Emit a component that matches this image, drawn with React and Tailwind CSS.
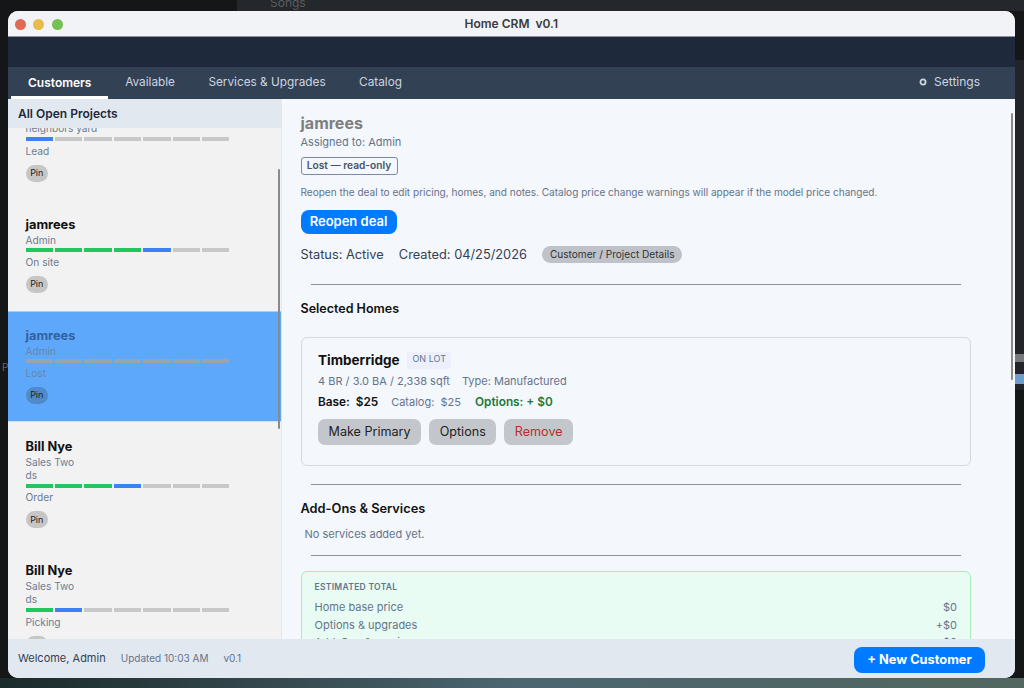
import { Fragment } from 'react';

const tabs = ['Customers', 'Available', 'Services & Upgrades', 'Catalog'];

const customers = [
  { name: 'jamrees', owner: 'Admin', note: 'neighbors yard', stage: 'Lead', done: 0, current: 0 },
  { name: 'jamrees', owner: 'Admin', stage: 'On site', done: 4, current: 4 },
  { name: 'jamrees', owner: 'Admin', stage: 'Lost', done: 0, current: -1, selected: true },
  { name: 'Bill Nye', owner: 'Sales Two', note: 'ds', stage: 'Order', done: 3, current: 3 },
  { name: 'Bill Nye', owner: 'Sales Two', note: 'ds', stage: 'Picking', done: 1, current: 1 },
];

function StageBar({ done, current, selected }) {
  return (
    <div className="mt-[1.5px] flex h-1 w-[204px] gap-[2px]">
      {[0, 1, 2, 3, 4, 5, 6].map((i) => {
        let color = selected ? 'bg-[#9aa3b0]' : 'bg-[#c8c8c8]';
        if (i < done) color = 'bg-[#22c55e]';
        if (i === current) color = 'bg-[#3b82f6]';
        return <div key={i} className={`flex-1 ${color}`} />;
      })}
    </div>
  );
}

function CustomerCard({ c }) {
  const sub = c.selected ? 'text-[#6685ad]' : 'text-[#6b7c95]';
  return (
    <div
      className={`px-[18px] pt-[16.5px] pb-[18.5px] ${
        c.selected ? 'bg-[#5ea8fb] shadow-[inset_0_1px_0_#a9cdf8,inset_0_-1px_0_#cfe0f5]' : ''
      }`}
    >
      <div className={`h-4 text-[12.8px] leading-4 font-bold ${c.selected ? 'text-[#33619f]' : 'text-[#111]'}`}>
        {c.name}
      </div>
      <div className={`h-[14px] text-[10.1px] leading-[14px] ${sub}`}>{c.owner}</div>
      {c.note && <div className={`h-[13.5px] text-[10.1px] leading-[13.5px] ${sub}`}>{c.note}</div>}
      <StageBar done={c.done} current={c.current} selected={c.selected} />
      <div className={`mt-[2.5px] h-[14px] text-[10.2px] leading-[14px] ${sub}`}>{c.stage}</div>
      <div
        className={`mt-[7px] flex h-[17px] w-[22.5px] items-center justify-center rounded-full text-[9px] text-[#222] ${
          c.selected ? 'bg-[#4f8acb]' : 'bg-[#c6c6c6]'
        }`}
      >
        Pin
      </div>
    </div>
  );
}

function Divider() {
  return <div className="mr-[54.5px] ml-[10.5px] h-px bg-[#8f9196]" />;
}

function GrayButton({ children, className = '' }) {
  return (
    <button type="button" className={`h-[26px] rounded-[7px] bg-[#c3c7cc] px-[10.5px] pt-px text-[12.6px] ${className}`}>
      {children}
    </button>
  );
}

function PriceRow({ label, value }) {
  return (
    <div className="flex h-[17.5px] items-center justify-between text-[11px] text-[#64748b]">
      <span>{label}</span>
      <span>{value}</span>
    </div>
  );
}

export default function App() {
  return (
    <div className="relative h-[688px] w-[1024px] overflow-hidden bg-[#151617] pt-[11px] pr-[9px] pb-[10px] pl-[7.5px] font-['Inter',sans-serif]">
      {/* desktop behind the window */}
      <div className="absolute top-0 right-0 left-[237px] h-[11px] bg-[#24272b]" />
      <div className="absolute top-0 left-[270px] text-[12px] leading-[6px] text-[#5a5d61]">Songs</div>
      <div className="absolute top-[60px] right-0 h-[330px] w-[9px] bg-[#222429]" />
      <div className="absolute top-[354px] right-0 h-2 w-[9px] bg-[#77797c]" />
      <div className="absolute top-[374px] right-0 h-[10px] w-[9px] bg-[#6f9ccb]" />
      <div className="absolute top-[360px] left-[2px] text-[10px] text-[#666]">P</div>
      <div className="absolute right-0 bottom-0 left-0 h-[10px] bg-gradient-to-r from-[#1b2a2a] via-[#4c6570] to-[#52675f]" />

      <div className="relative flex h-[667px] w-[1007.5px] flex-col overflow-hidden rounded-[10px] bg-[#f4f7fc]">
        <div className="relative flex h-[26px] items-center justify-center border-b border-[#8f9299] bg-[#f2f3f6]">
          <div className="absolute top-[7.5px] left-[7px] flex gap-[7.5px]">
            <span className="h-[11px] w-[11px] rounded-full bg-[#dd6b55]" />
            <span className="h-[11px] w-[11px] rounded-full bg-[#e8bb4a]" />
            <span className="h-[11px] w-[11px] rounded-full bg-[#73c153]" />
          </div>
          <span className="text-[12px] font-semibold whitespace-pre text-[#3a3a3a]">Home CRM  v0.1</span>
        </div>
        <div className="h-[30px] bg-[#1e293b]" />
        <div className="flex h-[32px] items-stretch justify-between bg-[#334155] pr-[35px] pl-[3.5px]">
          <div className="flex">
            {tabs.map((t, i) => (
              <div
                key={t}
                className={`flex items-center border-b-[3px] pt-[2px] ${
                  i === 0
                    ? 'border-white px-[17px] text-[12px] font-semibold text-white'
                    : 'border-transparent px-[16.7px] text-[11.8px] text-[#cbd5e1]'
                }`}
              >
                {t}
              </div>
            ))}
          </div>
          <div className="flex items-center gap-[7px] pb-[2px] text-[12px] text-[#cbd5e1]">
            <svg width="8" height="8" viewBox="0 0 8 8">
              <circle cx="4" cy="4" r="2.6" fill="none" stroke="#cbd5e1" strokeWidth="1.8" />
            </svg>
            Settings
          </div>
        </div>

        <div className="relative flex min-h-0 flex-1">
          <aside className="flex w-[274.5px] shrink-0 flex-col overflow-hidden border-r border-[#e2e8f0] bg-[#f2f2f2]">
            <div className="relative z-10 flex h-[29px] shrink-0 items-center bg-[#e2e8f0] pl-[10.5px] text-[12px] font-semibold text-[#1e293b]">
              All Open Projects
            </div>
            <div className="-mt-[52.5px]">
              {customers.map((c, i) => (
                <Fragment key={i}>
                  <CustomerCard c={c} />
                </Fragment>
              ))}
            </div>
          </aside>
          <div className="absolute top-[70px] left-[270.5px] h-[260px] w-[2px] rounded-full bg-[#8a8a8a]" />

          <main className="min-w-0 flex-1 overflow-hidden pt-[15px] pl-[18.5px]">
            <h1 className="h-[18px] text-[16px] leading-[18px] font-bold text-[#7f7f7f]">jamrees</h1>
            <div className="mt-[3px] text-[11px] leading-[14px] text-[#64748b]">Assigned to: Admin</div>
            <div className="mt-[7.5px] flex h-[18px] w-[97px] items-center justify-center rounded-[3px] border border-[#7a8aa3] text-[10.2px] font-semibold text-[#475569]">
              Lost — read-only
            </div>
            <p className="mt-[10px] text-[10.05px] leading-[14px] text-[#64748b]">
              Reopen the deal to edit pricing, homes, and notes. Catalog price change warnings will appear if the model price changed.
            </p>
            <button
              type="button"
              className="mt-[11.5px] flex h-6 w-[96px] items-center justify-center rounded-lg bg-[#007aff] text-[13px] font-semibold text-white"
            >
              Reopen deal
            </button>
            <div className="mt-[11.5px] flex h-[18px] items-center text-[12.8px] text-[#334155]">
              <span>Status: Active</span>
              <span className="ml-[15px]">Created: 04/25/2026</span>
              <span className="ml-[15px] flex h-[17.5px] items-center rounded-full bg-[#bfc3c9] px-2 text-[10.1px] text-[#333]">
                Customer / Project Details
              </span>
            </div>

            <div className="mt-[20.5px]">
              <Divider />
            </div>
            <h2 className="mt-[14.5px] h-[18px] text-[12.5px] leading-[18px] font-semibold text-[#111]">Selected Homes</h2>

            <section className="mt-[19.5px] mr-[44px] h-[129px] rounded-[6px] border border-[#d5d9e0] px-[16.5px] pt-[13.5px]">
              <div className="flex h-[18px] items-center">
                <span className="text-[13.5px] font-bold text-[#111]">Timberridge</span>
                <span className="ml-2 h-[17px] rounded-[3px] bg-[#ecf0fc] px-[5px] text-[9px] leading-[14px] text-[#64748b]">
                  ON LOT
                </span>
              </div>
              <div className="mt-[3px] flex h-[17px] items-center text-[11px] text-[#64748b]">
                <span>4 BR / 3.0 BA / 2,338 sqft</span>
                <span className="ml-3">Type: Manufactured</span>
              </div>
              <div className="mt-[4px] flex h-[17px] items-baseline text-[11.8px] leading-[17px]">
                <span className="font-semibold whitespace-pre text-[#111]">Base:  $25</span>
                <span className="ml-[13px] whitespace-pre text-[11px] text-[#64748b]">Catalog:  $25</span>
                <span className="ml-[14px] font-semibold text-[#1a7a3a]">Options: + $0</span>
              </div>
              <div className="mt-[8.5px] flex gap-2">
                <GrayButton className="text-[#222]">Make Primary</GrayButton>
                <GrayButton className="text-[#222]">Options</GrayButton>
                <GrayButton className="text-[#c5282d]">Remove</GrayButton>
              </div>
            </section>

            <div className="mt-[18px]">
              <Divider />
            </div>
            <h2 className="mt-[15px] h-[18px] text-[12.8px] leading-[18px] font-semibold text-[#111]">
              Add-Ons &amp; Services
            </h2>
            <div className="mt-[9px] h-[14px] pl-1 text-[11px] leading-[14px] text-[#64748b]">No services added yet.</div>
            <div className="mt-[14px]">
              <Divider />
            </div>

            <section className="mt-[15px] mr-[44px] h-[100px] rounded-[6px] border border-[#a5eebc] bg-[#e9fcf3] px-[13px] pt-[9px]">
              <div className="text-[8.5px] leading-[12px] font-semibold tracking-[0.3px] text-[#64748b]">ESTIMATED TOTAL</div>
              <div className="mt-[5.5px]">
                <PriceRow label="Home base price" value="$0" />
                <PriceRow label="Options & upgrades" value="+$0" />
                <PriceRow label="Add-Ons & services" value="+$0" />
              </div>
            </section>
          </main>
          <div className="absolute top-[14px] right-[2px] h-[267px] w-[2px] rounded-full bg-[#8a8a8a]" />
        </div>

        <footer className="relative flex h-[39px] shrink-0 items-center justify-between bg-[#e2e8f0] pr-[30px] pl-[10.5px]">
          <div className="flex items-center">
            <span className="text-[11px] text-[#334155]">Welcome, Admin</span>
            <span className="ml-[15px] text-[10px] text-[#64748b]">Updated 10:03 AM</span>
            <span className="ml-[15px] text-[10px] text-[#64748b]">v0.1</span>
          </div>
          <button
            type="button"
            className="mt-[2px] h-[26px] w-[131px] rounded-lg bg-[#007aff] text-[12.8px] font-bold text-white"
          >
            + New Customer
          </button>
        </footer>
      </div>
    </div>
  );
}
